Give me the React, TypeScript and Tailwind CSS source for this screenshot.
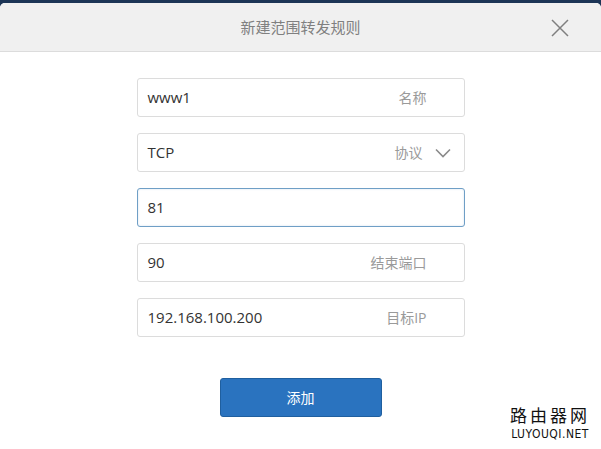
import React from "react";

const font = { fontFamily: '"Open Sans", "Noto Sans CJK SC", sans-serif' };

function Field({ value, label, focused, chevron }: { value: string; label?: string; focused?: boolean; chevron?: boolean }) {
  return (
    <div
      className={
        "flex h-[39px] w-[328px] items-center rounded-[3px] border bg-white pl-[10px] " +
        (focused ? "border-[#6f9fc6] shadow-[inset_0_0_2px_rgba(100,150,200,0.3)]" : "border-[#dcdcdc]")
      }
    >
      <span className="flex-1 text-[15px] text-[#333]">{value}</span>
      {label && (
        <span className={"text-[14px] text-[#9a9a9a] " + (chevron ? "mr-[12px]" : "mr-[37px]")}>{label}</span>
      )}
      {chevron && (
        <svg width="16" height="10" viewBox="0 0 16 10" className="mr-[13px]">
          <path d="M1 1.5 L8 8.5 L15 1.5" fill="none" stroke="#8a8a8a" strokeWidth="1.6" />
        </svg>
      )}
    </div>
  );
}

export default function App() {
  return (
    <div className="h-[449px] w-[601px] overflow-hidden bg-[#1c3556]" style={font}>
      <div className="mt-[3px] flex h-[446px] flex-col rounded-t-[5px] bg-white">
        <div className="relative flex h-[49px] items-center justify-center rounded-t-[5px] border-b border-[#dcdcdc] bg-[#f0f0f0]">
          <span className="text-[15px] text-[#808080]">新建范围转发规则</span>
          <svg width="18" height="18" viewBox="0 0 18 18" className="absolute left-[551px] top-[16px]">
            <path d="M1 1 L17 17 M17 1 L1 17" stroke="#7f7f7f" strokeWidth="1.5" />
          </svg>
        </div>
        <div className="flex flex-col items-center gap-[16px] pt-[26px]">
          <Field value="www1" label="名称" />
          <Field value="TCP" label="协议" chevron />
          <Field value="81" focused />
          <Field value="90" label="结束端口" />
          <Field value="192.168.100.200" label="目标IP" />
        </div>
        <div className="relative flex-1">
          <div className="flex justify-center pt-[41px]">
            <button className="h-[39px] w-[162px] rounded-[3px] border border-[#1f5f9f] bg-[#2a73bf] text-[14px] text-white">
              添加
            </button>
          </div>
          <div className="absolute bottom-[8px] right-[11px] flex flex-col items-center">
            <div className="h-[20px] text-[17px] leading-[20px] tracking-[3px] text-[#111]" style={{ fontFamily: '"Noto Sans CJK SC", sans-serif' }}>路由器网</div>
            <div className="mt-[3px] h-[13px] text-[12px] leading-[13px] tracking-[0.5px] text-[#111]" style={{ fontFamily: '"DejaVu Sans Condensed", "Liberation Sans", sans-serif' }}>LUYOUQI.NET</div>
          </div>
        </div>
      </div>
    </div>
  );
}
